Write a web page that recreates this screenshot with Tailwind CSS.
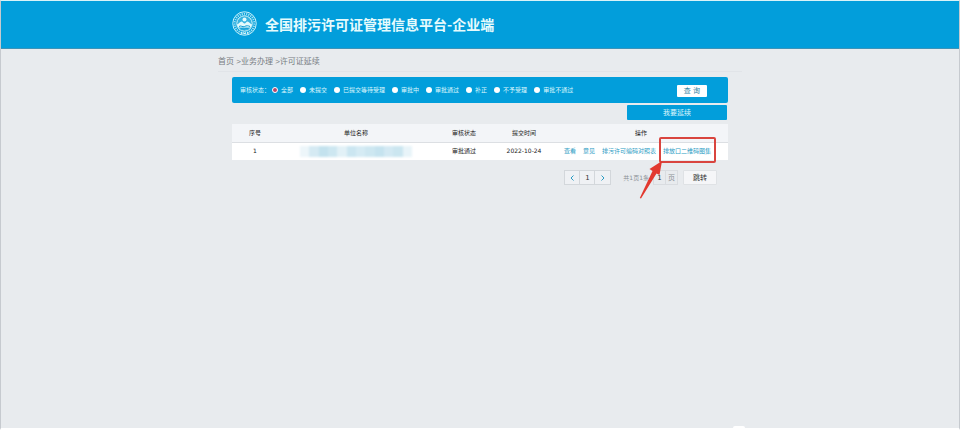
<!DOCTYPE html>
<html lang="zh-CN">
<head>
    <meta charset="UTF-8">
    <meta name="viewport" content="width=device-width, initial-scale=1.0">
    <title>全国排污许可证管理信息平台-企业端</title>
    <script src="https://cdn.jsdelivr.net/npm/@tailwindcss/browser@4"></script>
</head>
<body class="relative flex min-h-screen flex-col overflow-x-hidden border border-b-2 border-x-[#c6cacf] border-t-[#d9f3f8] border-b-white bg-[#e8ebee] font-['DejaVu_Sans','Noto_Sans_CJK_SC',sans-serif] text-[6px] leading-[8px] text-[#222]">
    <header class="border-b border-[#3d93b8] bg-[#029edb]">
        <div class="mx-auto flex h-[47px] max-w-[496px] items-center gap-2 pb-[2px]">
            <svg class="size-[25px] shrink-0" viewBox="0 0 50 50" fill="none" aria-hidden="true">
                <circle cx="25" cy="25" r="23.5" stroke="#c9f1fa" stroke-width="2"/>
                <circle cx="25" cy="25" r="19.5" stroke="#a5e2f3" stroke-width="4" stroke-dasharray="2.5 2"/>
                <circle cx="25" cy="25" r="15.5" fill="#38b3e0" stroke="#d9f7fb" stroke-width="2"/>
                <circle cx="25" cy="17" r="4" fill="#e4fafc"/>
                <path d="M10 27c4-1 6-6 9-6 2 0 4 4 6 4s4-4 6-4c3 0 5 5 9 6-1 3-2 4-3 6H13c-2-2-3-4-3-6z" fill="#e4fafc"/>
                <path d="M14 31c4-3 7 2 11 0s7-2 11 0M17 36c3-2 5 1 8 0s5-2 8 0" stroke="#0b9bd5" stroke-width="2"/>
                <path d="M18 44h3M24 45h3M30 44h3" stroke="#e4fafc" stroke-width="3"/>
            </svg>
            <h1 class="font-['Noto_Sans_CJK_SC',sans-serif] text-[14px] leading-[20px] font-bold text-[#e6fbfd]">全国排污许可证管理信息平台-企业端</h1>
        </div>
    </header>

    <nav class="mx-auto flex h-[23px] w-full max-w-[524px] items-center border-b border-[#e1e4e8] pt-[3px] font-['Liberation_Sans','Noto_Sans_CJK_SC',sans-serif] text-[8px] whitespace-pre text-[#777c82]" aria-label="面包屑"><a href="#">首页</a> &gt;<a href="#">业务办理</a> &gt;<a href="#">许可证延续</a></nav>

    <main class="mx-auto w-full max-w-[496px] pt-[5px]">
        <form class="flex h-[26px] items-center justify-between rounded-[2px] bg-[#029edb] pr-[21px] pl-2 text-[#dff8fd]">
            <fieldset class="flex items-center gap-[7px]">
                <legend class="float-left -mr-[5px]">审核状态：</legend>
                <label class="flex items-center gap-[3px]"><input type="radio" name="status" checked class="size-[6px] appearance-none rounded-full bg-white checked:border checked:border-white checked:bg-[#b8466a]">全部</label>
                <label class="flex items-center gap-[3px]"><input type="radio" name="status" class="size-[6px] appearance-none rounded-full bg-white checked:border checked:border-white checked:bg-[#b8466a]">未提交</label>
                <label class="flex items-center gap-[3px]"><input type="radio" name="status" class="size-[6px] appearance-none rounded-full bg-white checked:border checked:border-white checked:bg-[#b8466a]">已提交等待受理</label>
                <label class="flex items-center gap-[3px]"><input type="radio" name="status" class="size-[6px] appearance-none rounded-full bg-white checked:border checked:border-white checked:bg-[#b8466a]">审批中</label>
                <label class="flex items-center gap-[3px]"><input type="radio" name="status" class="size-[6px] appearance-none rounded-full bg-white checked:border checked:border-white checked:bg-[#b8466a]">审批通过</label>
                <label class="flex items-center gap-[3px]"><input type="radio" name="status" class="size-[6px] appearance-none rounded-full bg-white checked:border checked:border-white checked:bg-[#b8466a]">补正</label>
                <label class="flex items-center gap-[3px]"><input type="radio" name="status" class="size-[6px] appearance-none rounded-full bg-white checked:border checked:border-white checked:bg-[#b8466a]">不予受理</label>
                <label class="flex items-center gap-[3px]"><input type="radio" name="status" class="size-[6px] appearance-none rounded-full bg-white checked:border checked:border-white checked:bg-[#b8466a]">审批不通过</label>
            </fieldset>
            <button type="button" class="mt-[2px] flex h-3 items-center rounded-[1px] bg-white px-[7px] text-[7px] whitespace-pre text-[#2f7f9f]">查 询</button>
        </form>

        <div class="mt-[2px] flex justify-end pr-px">
            <button type="button" class="h-[15px] w-[100px] rounded-[1px] bg-[#029edb] text-[7px] text-[#dff8fd]">我要延续</button>
        </div>

        <table class="mt-1 w-full table-fixed border-collapse text-center">
            <thead>
                <tr class="h-[18px] border-b border-[#dcdfe3] bg-[#f3f5f8]">
                    <th class="w-[46px] font-normal">序号</th>
                    <th class="font-normal">单位名称</th>
                    <th class="w-[60px] font-normal">审核状态</th>
                    <th class="w-[60px] font-normal">提交时间</th>
                    <th class="w-[174px] font-normal">操作</th>
                </tr>
            </thead>
            <tbody>
                <tr class="h-[18px] bg-white">
                    <td>1</td>
                    <td>
                        <!-- company name, masked -->
                        <div class="mx-auto flex h-[11px] w-[112px] blur-[1px]">
                            <span class="flex-1 bg-[#edf6fa]"></span>
                            <span class="flex-1 bg-[#d5eaf3]"></span>
                            <span class="flex-1 bg-[#c3e2ee]"></span>
                            <span class="flex-1 bg-[#cde7f1]"></span>
                            <span class="flex-1 bg-[#e2f1f7]"></span>
                            <span class="flex-1 bg-[#cbe6f1]"></span>
                            <span class="flex-1 bg-[#d5ebf4]"></span>
                            <span class="flex-1 bg-[#cde7f1]"></span>
                            <span class="flex-1 bg-[#c5e3ef]"></span>
                            <span class="flex-1 bg-[#d3e9f3]"></span>
                            <span class="flex-1 bg-[#cbe6f0]"></span>
                            <span class="flex-1 bg-[#e8f4f9]"></span>
                        </div>
                    </td>
                    <td>审批通过</td>
                    <td>2022-10-24</td>
                    <td>
                        <div class="flex gap-[7px] px-[10px] whitespace-nowrap text-[#2c9cc4]">
                            <a href="#">查看</a>
                            <a href="#">意见</a>
                            <a href="#">排污许可编码对照表</a>
                            <a href="#" class="relative">排放口二维码图集
                                <svg class="pointer-events-none absolute -top-[10px] -left-6 h-[64px] w-[80px]" viewBox="0 0 80 64" fill="none" aria-hidden="true">
                                    <rect x="21" y="1" width="55" height="24" rx="1" stroke="#d9453f" stroke-width="2"/>
                                    <path d="M23 24L20.500 38L17.500 36.500L2 61.500L0.800 61L13.500 34L10.500 32Z" fill="#e2392f"/>
                                </svg>
                            </a>
                        </div>
                    </td>
                </tr>
            </tbody>
        </table>

        <div class="mt-[10px] flex items-center justify-end pr-[11px] text-[#8b9095]">
            <div class="mr-3 flex h-[15px] divide-x divide-[#d3d7db] border border-[#d3d7db] bg-[#eff1f4]">
                <button type="button" aria-label="上一页" class="flex w-[15px] items-center justify-center text-[#2c9cc4]"><svg class="h-[6px] w-1" viewBox="0 0 4 6" fill="none" stroke="currentColor"><path d="M3.500.500L1 3l2.500 2.500"/></svg></button>
                <button type="button" class="w-[15px] text-[7px] text-[#333]">1</button>
                <button type="button" aria-label="下一页" class="flex w-[15px] items-center justify-center text-[#2c9cc4]"><svg class="h-[6px] w-1" viewBox="0 0 4 6" fill="none" stroke="currentColor"><path d="M.500.500L3 3L.500 5.500"/></svg></button>
            </div>
            <span class="mr-1">共1页1条</span>
            <label class="mr-[5px] flex h-[15px] items-center border border-[#d9dce0] pr-[2px] text-[7px]">
                <input type="text" value="1" aria-label="页码" class="mr-[2px] h-[13px] w-3 border-r border-[#d9dce0] text-center text-[7px] text-[#333]">页
            </label>
            <button type="button" class="h-[15px] w-[34px] rounded-[1px] border border-[#dfe2e5] bg-[#f5f6f8] text-[7px] text-[#333]">跳转</button>
        </div>
    </main>

    <div class="absolute bottom-0 left-[732px] h-[2px] w-3 rounded-t-full bg-white"></div>
</body>
</html>
